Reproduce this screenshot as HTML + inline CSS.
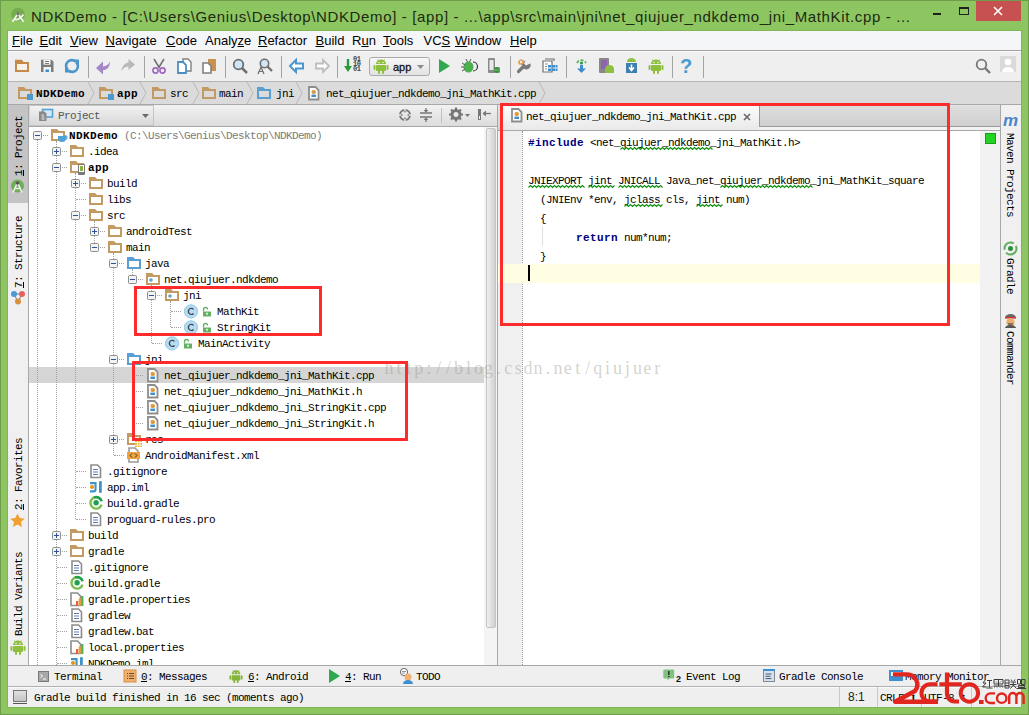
<!DOCTYPE html><html><head><meta charset="utf-8"><style>
*{margin:0;padding:0;box-sizing:border-box}
html,body{width:1029px;height:715px;overflow:hidden;background:#8dc661}
body{position:relative;font-family:"Liberation Sans",sans-serif}
.a{position:absolute;white-space:pre}
.m{font-family:"Liberation Mono",monospace;font-size:11px;letter-spacing:-0.6px;line-height:16px;color:#000}
.mb{font-weight:bold;letter-spacing:0.4px}
.menu{font-size:13px;line-height:19px;color:#000}
.sep{position:absolute;width:1px;background:#a4a4a4}
svg{position:absolute;overflow:visible}
.vd{position:absolute;width:1px;border-left:1px dotted #a3a3a3}
.hd{position:absolute;height:1px;border-top:1px dotted #a3a3a3}
.vt{position:absolute;transform-origin:0 0;font-family:"Liberation Mono",monospace;font-size:11px;letter-spacing:-0.6px;line-height:14px;color:#000;white-space:pre}
</style></head><body>
<div class="a" style="left:0px;top:0px;width:1029px;height:715px;background:transparent;border:1px solid #6f9c4c"></div>
<div class="a " style="left:31px;top:8px;font-size:15px;letter-spacing:0.64px;color:#1d2a12;line-height:18px">NDKDemo - [C:\Users\Genius\Desktop\NDKDemo] - [app] - ...\app\src\main\jni\net_qiujuer_ndkdemo_jni_MathKit.cpp - ...</div>
<svg style="left:10px;top:7px" width="16" height="16" viewBox="0 0 16 16"><circle cx="8" cy="7.5" r="6.8" fill="#76ad4c"/><path d="M6.8 9.5V5.8a1.2 1.4 0 0 1 2.4 0V9.5z" fill="#7a7a7a"/><path d="M2.5 14.7L7 8M13.5 14.7L9 8M4.5 12q3.5 2.5 9-4.5" fill="none" stroke="#f4f4f4" stroke-width="1.7"/></svg>
<div class="a" style="left:933px;top:13px;width:8px;height:2px;background:#1f1f1f;"></div>
<div class="a" style="left:959px;top:7px;width:10px;height:8px;border:1px solid #1f1f1f;border-top-width:2px"></div>
<div class="a" style="left:976px;top:1px;width:45px;height:20px;background:#c75050;"></div>
<svg style="left:993px;top:6px" width="10" height="10" viewBox="0 0 10 10"><path d="M1 1l8 8M9 1l-8 8" stroke="#fff" stroke-width="1.6"/></svg>
<div class="a" style="left:7px;top:30px;width:1015px;height:678px;background:#80b656;"></div>
<div class="a" style="left:8px;top:31px;width:1013px;height:676px;background:#ececec;"></div>
<div class="a" style="left:8px;top:31px;width:1013px;height:19px;background:#f5f6f7;"></div>
<div class="a" style="left:8px;top:50px;width:1013px;height:1px;background:#a0a0a0;"></div>
<div class="a menu" style="left:12px;top:31px;"><u>F</u>ile</div>
<div class="a menu" style="left:39.5px;top:31px;"><u>E</u>dit</div>
<div class="a menu" style="left:70px;top:31px;"><u>V</u>iew</div>
<div class="a menu" style="left:105.5px;top:31px;"><u>N</u>avigate</div>
<div class="a menu" style="left:166px;top:31px;"><u>C</u>ode</div>
<div class="a menu" style="left:205px;top:31px;">Analy<u>z</u>e</div>
<div class="a menu" style="left:258px;top:31px;"><u>R</u>efactor</div>
<div class="a menu" style="left:315.5px;top:31px;"><u>B</u>uild</div>
<div class="a menu" style="left:352px;top:31px;">R<u>u</u>n</div>
<div class="a menu" style="left:383px;top:31px;"><u>T</u>ools</div>
<div class="a menu" style="left:423.5px;top:31px;">VC<u>S</u></div>
<div class="a menu" style="left:455px;top:31px;"><u>W</u>indow</div>
<div class="a menu" style="left:510px;top:31px;"><u>H</u>elp</div>
<div class="a" style="left:8px;top:51px;width:1013px;height:30px;background:#efefef;"></div>
<div class="a" style="left:8px;top:51px;width:1013px;height:1px;background:#fafafa;"></div>
<div class="a" style="left:8px;top:81px;width:1013px;height:1px;background:#b4b4b4;"></div>
<div class="a" style="left:8px;top:82px;width:1013px;height:22px;background:#dbdbdb;"></div>
<div class="a" style="left:8px;top:104px;width:1013px;height:1px;background:#a8a8a8;"></div>
<div class="a" style="left:8px;top:105px;width:20px;height:560px;background:#f0f0f0;"></div>
<div class="a" style="left:8px;top:105px;width:20px;height:98px;background:#c4c4c4;"></div>
<div class="a" style="left:28px;top:105px;width:1px;height:560px;background:#a8a8a8;"></div>
<div class="a" style="left:29px;top:105px;width:468px;height:21px;background:linear-gradient(#f2f2f2,#dcdcdc);"></div>
<div class="a" style="left:29px;top:126px;width:468px;height:1px;background:#a8a8a8;"></div>
<div class="a" style="left:29px;top:127px;width:468px;height:538px;background:#fff;"></div>
<div class="a" style="left:497px;top:105px;width:1px;height:560px;background:#a8a8a8;"></div>
<div class="a" style="left:29px;top:367px;width:455px;height:16px;background:#d5d5d5;"></div>
<div class="vd" style="left:37px;top:140px;height:525px"></div>
<div class="vd" style="left:56px;top:141px;height:524px"></div>
<div class="vd" style="left:75px;top:173px;height:346px"></div>
<div class="vd" style="left:94px;top:221px;height:26px"></div>
<div class="vd" style="left:113px;top:253px;height:202px"></div>
<div class="vd" style="left:132px;top:269px;height:10px"></div>
<div class="vd" style="left:151px;top:285px;height:58px"></div>
<div class="vd" style="left:170px;top:301px;height:26px"></div>
<div class="vd" style="left:132px;top:365px;height:58px"></div>
<div class="hd" style="left:38px;top:135px;width:10px"></div>
<div class="hd" style="left:57px;top:151px;width:10px"></div>
<div class="hd" style="left:57px;top:167px;width:10px"></div>
<div class="hd" style="left:76px;top:183px;width:10px"></div>
<div class="hd" style="left:76px;top:199px;width:10px"></div>
<div class="hd" style="left:76px;top:215px;width:10px"></div>
<div class="hd" style="left:95px;top:231px;width:10px"></div>
<div class="hd" style="left:95px;top:247px;width:10px"></div>
<div class="hd" style="left:114px;top:263px;width:10px"></div>
<div class="hd" style="left:133px;top:279px;width:10px"></div>
<div class="hd" style="left:152px;top:295px;width:10px"></div>
<div class="hd" style="left:171px;top:311px;width:10px"></div>
<div class="hd" style="left:171px;top:327px;width:10px"></div>
<div class="hd" style="left:152px;top:343px;width:10px"></div>
<div class="hd" style="left:114px;top:359px;width:10px"></div>
<div class="hd" style="left:133px;top:375px;width:10px"></div>
<div class="hd" style="left:133px;top:391px;width:10px"></div>
<div class="hd" style="left:133px;top:407px;width:10px"></div>
<div class="hd" style="left:133px;top:423px;width:10px"></div>
<div class="hd" style="left:114px;top:439px;width:10px"></div>
<div class="hd" style="left:114px;top:455px;width:10px"></div>
<div class="hd" style="left:76px;top:471px;width:10px"></div>
<div class="hd" style="left:76px;top:487px;width:10px"></div>
<div class="hd" style="left:76px;top:503px;width:10px"></div>
<div class="hd" style="left:76px;top:519px;width:10px"></div>
<div class="hd" style="left:57px;top:535px;width:10px"></div>
<div class="hd" style="left:57px;top:551px;width:10px"></div>
<div class="hd" style="left:57px;top:567px;width:10px"></div>
<div class="hd" style="left:57px;top:583px;width:10px"></div>
<div class="hd" style="left:57px;top:599px;width:10px"></div>
<div class="hd" style="left:57px;top:615px;width:10px"></div>
<div class="hd" style="left:57px;top:631px;width:10px"></div>
<div class="hd" style="left:57px;top:647px;width:10px"></div>
<div class="hd" style="left:57px;top:663px;width:10px"></div>
<svg style="left:33px;top:131px" width="9" height="9" viewBox="0 0 9 9"><rect x=".5" y=".5" width="8" height="8" rx="1" fill="#f3f3f3" stroke="#8f8f8f"/><path d="M2 4.5h5" stroke="#2f4f9a"/></svg>
<svg style="left:50px;top:127px" width="16" height="16" viewBox="0 0 16 16"><path d="M1 2h6l2 2h6v10H1z M3 6v6h10V6z" fill="#c39a62" fill-rule="evenodd"/><path d="M8 9h8v2.5a4 3.5 0 0 1-8 0z" fill="#4ea3d9"/><circle cx="15.5" cy="10.5" r="1.6" fill="none" stroke="#4ea3d9" stroke-width="1.2"/></svg>
<div class="a m" style="left:69px;top:128px;"><span class="mb">NDKDemo</span> <span style="color:#7b7b7b">(C:\Users\Genius\Desktop\NDKDemo)</span></div>
<svg style="left:52px;top:147px" width="9" height="9" viewBox="0 0 9 9"><rect x=".5" y=".5" width="8" height="8" rx="1" fill="#f3f3f3" stroke="#8f8f8f"/><path d="M2 4.5h5" stroke="#2f4f9a"/><path d="M4.5 2v5" stroke="#2f4f9a"/></svg>
<svg style="left:69px;top:143px" width="16" height="16" viewBox="0 0 16 16"><path d="M1 2h6l2 2h6v10H1z M3 6v6h10V6z" fill="#c39a62" fill-rule="evenodd"/></svg>
<div class="a m" style="left:88px;top:144px;">.idea</div>
<svg style="left:52px;top:163px" width="9" height="9" viewBox="0 0 9 9"><rect x=".5" y=".5" width="8" height="8" rx="1" fill="#f3f3f3" stroke="#8f8f8f"/><path d="M2 4.5h5" stroke="#2f4f9a"/></svg>
<svg style="left:69px;top:159px" width="16" height="16" viewBox="0 0 16 16"><path d="M1 2h6l2 2h6v10H1z M3 6v6h10V6z" fill="#c39a62" fill-rule="evenodd"/><rect x="9" y="5" width="7" height="11" rx="1" fill="#7a7a7a"/><rect x="10" y="6" width="5" height="7" fill="#fff"/><rect x="11" y="7" width="3" height="5" fill="#8bb33a"/></svg>
<div class="a m mb" style="left:88px;top:160px;">app</div>
<svg style="left:71px;top:179px" width="9" height="9" viewBox="0 0 9 9"><rect x=".5" y=".5" width="8" height="8" rx="1" fill="#f3f3f3" stroke="#8f8f8f"/><path d="M2 4.5h5" stroke="#2f4f9a"/><path d="M4.5 2v5" stroke="#2f4f9a"/></svg>
<svg style="left:88px;top:175px" width="16" height="16" viewBox="0 0 16 16"><path d="M1 2h6l2 2h6v10H1z M3 6v6h10V6z" fill="#c39a62" fill-rule="evenodd"/></svg>
<div class="a m" style="left:107px;top:176px;">build</div>
<svg style="left:88px;top:191px" width="16" height="16" viewBox="0 0 16 16"><path d="M1 2h6l2 2h6v10H1z M3 6v6h10V6z" fill="#c39a62" fill-rule="evenodd"/></svg>
<div class="a m" style="left:107px;top:192px;">libs</div>
<svg style="left:71px;top:211px" width="9" height="9" viewBox="0 0 9 9"><rect x=".5" y=".5" width="8" height="8" rx="1" fill="#f3f3f3" stroke="#8f8f8f"/><path d="M2 4.5h5" stroke="#2f4f9a"/></svg>
<svg style="left:88px;top:207px" width="16" height="16" viewBox="0 0 16 16"><path d="M1 2h6l2 2h6v10H1z M3 6v6h10V6z" fill="#c39a62" fill-rule="evenodd"/></svg>
<div class="a m" style="left:107px;top:208px;">src</div>
<svg style="left:90px;top:227px" width="9" height="9" viewBox="0 0 9 9"><rect x=".5" y=".5" width="8" height="8" rx="1" fill="#f3f3f3" stroke="#8f8f8f"/><path d="M2 4.5h5" stroke="#2f4f9a"/><path d="M4.5 2v5" stroke="#2f4f9a"/></svg>
<svg style="left:107px;top:223px" width="16" height="16" viewBox="0 0 16 16"><path d="M1 2h6l2 2h6v10H1z M3 6v6h10V6z" fill="#c39a62" fill-rule="evenodd"/></svg>
<div class="a m" style="left:126px;top:224px;">androidTest</div>
<svg style="left:90px;top:243px" width="9" height="9" viewBox="0 0 9 9"><rect x=".5" y=".5" width="8" height="8" rx="1" fill="#f3f3f3" stroke="#8f8f8f"/><path d="M2 4.5h5" stroke="#2f4f9a"/></svg>
<svg style="left:107px;top:239px" width="16" height="16" viewBox="0 0 16 16"><path d="M1 2h6l2 2h6v10H1z M3 6v6h10V6z" fill="#c39a62" fill-rule="evenodd"/></svg>
<div class="a m" style="left:126px;top:240px;">main</div>
<svg style="left:109px;top:259px" width="9" height="9" viewBox="0 0 9 9"><rect x=".5" y=".5" width="8" height="8" rx="1" fill="#f3f3f3" stroke="#8f8f8f"/><path d="M2 4.5h5" stroke="#2f4f9a"/></svg>
<svg style="left:126px;top:255px" width="16" height="16" viewBox="0 0 16 16"><path d="M1 2h6l2 2h6v10H1z M3 6v6h10V6z" fill="#5a9fd2" fill-rule="evenodd"/></svg>
<div class="a m" style="left:145px;top:256px;">java</div>
<svg style="left:128px;top:275px" width="9" height="9" viewBox="0 0 9 9"><rect x=".5" y=".5" width="8" height="8" rx="1" fill="#f3f3f3" stroke="#8f8f8f"/><path d="M2 4.5h5" stroke="#2f4f9a"/></svg>
<svg style="left:145px;top:271px" width="16" height="16" viewBox="0 0 16 16"><path d="M1 2h6l2 2h6v10H1z M3 6v6h10V6z" fill="#c39a62" fill-rule="evenodd"/><circle cx="6" cy="9" r="1.8" fill="#62a0d0"/></svg>
<div class="a m" style="left:164px;top:272px;">net.qiujuer.ndkdemo</div>
<svg style="left:147px;top:291px" width="9" height="9" viewBox="0 0 9 9"><rect x=".5" y=".5" width="8" height="8" rx="1" fill="#f3f3f3" stroke="#8f8f8f"/><path d="M2 4.5h5" stroke="#2f4f9a"/></svg>
<svg style="left:164px;top:287px" width="16" height="16" viewBox="0 0 16 16"><path d="M1 2h6l2 2h6v10H1z M3 6v6h10V6z" fill="#c39a62" fill-rule="evenodd"/><circle cx="6" cy="9" r="1.8" fill="#62a0d0"/></svg>
<div class="a m" style="left:183px;top:288px;">jni</div>
<svg style="left:183px;top:303px" width="16" height="16" viewBox="0 0 16 16"><circle cx="8" cy="8.4" r="6.6" fill="#b4dcf5" stroke="#92c7ea" stroke-width="1"/><path d="M10.5 6.3a2.9 3.1 0 1 0 0 4.2" fill="none" stroke="#404040" stroke-width="1.15"/><rect x="20" y="8.5" width="8" height="5" rx=".5" fill="#62b062"/><path d="M20.5 8.5V6.5a2 2 0 0 1 4 0" fill="none" stroke="#62b062" stroke-width="1.3"/><path d="M23 10.3h2M24 10.3v2" stroke="#fff" stroke-width=".9"/></svg>
<div class="a m" style="left:217px;top:304px;">MathKit</div>
<svg style="left:183px;top:319px" width="16" height="16" viewBox="0 0 16 16"><circle cx="8" cy="8.4" r="6.6" fill="#b4dcf5" stroke="#92c7ea" stroke-width="1"/><path d="M10.5 6.3a2.9 3.1 0 1 0 0 4.2" fill="none" stroke="#404040" stroke-width="1.15"/><rect x="20" y="8.5" width="8" height="5" rx=".5" fill="#62b062"/><path d="M20.5 8.5V6.5a2 2 0 0 1 4 0" fill="none" stroke="#62b062" stroke-width="1.3"/><path d="M23 10.3h2M24 10.3v2" stroke="#fff" stroke-width=".9"/></svg>
<div class="a m" style="left:217px;top:320px;">StringKit</div>
<svg style="left:164px;top:335px" width="16" height="16" viewBox="0 0 16 16"><circle cx="8" cy="8.4" r="6.6" fill="#b4dcf5" stroke="#92c7ea" stroke-width="1"/><path d="M10.5 6.3a2.9 3.1 0 1 0 0 4.2" fill="none" stroke="#404040" stroke-width="1.15"/><rect x="20" y="8.5" width="8" height="5" rx=".5" fill="#62b062"/><path d="M20.5 8.5V6.5a2 2 0 0 1 4 0" fill="none" stroke="#62b062" stroke-width="1.3"/><path d="M23 10.3h2M24 10.3v2" stroke="#fff" stroke-width=".9"/></svg>
<div class="a m" style="left:198px;top:336px;">MainActivity</div>
<svg style="left:109px;top:355px" width="9" height="9" viewBox="0 0 9 9"><rect x=".5" y=".5" width="8" height="8" rx="1" fill="#f3f3f3" stroke="#8f8f8f"/><path d="M2 4.5h5" stroke="#2f4f9a"/></svg>
<svg style="left:126px;top:351px" width="16" height="16" viewBox="0 0 16 16"><path d="M1 2h6l2 2h6v10H1z M3 6v6h10V6z" fill="#5a9fd2" fill-rule="evenodd"/></svg>
<div class="a m" style="left:145px;top:352px;">jni</div>
<svg style="left:145px;top:367px" width="16" height="16" viewBox="0 0 16 16"><path d="M3 2h6.5l3 3v9.5H3z" fill="#fff" stroke="#8d8d8d" stroke-width="1.8"/><circle cx="7.7" cy="7" r="2.3" fill="#f0a33c"/><rect x="5.4" y="9.6" width="4.6" height="2.4" fill="#3d8fd0"/><circle cx="7" cy="7" r=".5" fill="#3d8fd0"/><circle cx="8.5" cy="7" r=".5" fill="#3d8fd0"/></svg>
<div class="a m" style="left:164px;top:368px;">net_qiujuer_ndkdemo_jni_MathKit.cpp</div>
<svg style="left:145px;top:383px" width="16" height="16" viewBox="0 0 16 16"><path d="M3 2h6.5l3 3v9.5H3z" fill="#fff" stroke="#8d8d8d" stroke-width="1.8"/><circle cx="7.7" cy="7" r="2.3" fill="#f0a33c"/><rect x="5.4" y="9.6" width="4.6" height="2.4" fill="#3d8fd0"/><circle cx="7" cy="7" r=".5" fill="#3d8fd0"/><circle cx="8.5" cy="7" r=".5" fill="#3d8fd0"/></svg>
<div class="a m" style="left:164px;top:384px;">net_qiujuer_ndkdemo_jni_MathKit.h</div>
<svg style="left:145px;top:399px" width="16" height="16" viewBox="0 0 16 16"><path d="M3 2h6.5l3 3v9.5H3z" fill="#fff" stroke="#8d8d8d" stroke-width="1.8"/><circle cx="7.7" cy="7" r="2.3" fill="#f0a33c"/><rect x="5.4" y="9.6" width="4.6" height="2.4" fill="#3d8fd0"/><circle cx="7" cy="7" r=".5" fill="#3d8fd0"/><circle cx="8.5" cy="7" r=".5" fill="#3d8fd0"/></svg>
<div class="a m" style="left:164px;top:400px;">net_qiujuer_ndkdemo_jni_StringKit.cpp</div>
<svg style="left:145px;top:415px" width="16" height="16" viewBox="0 0 16 16"><path d="M3 2h6.5l3 3v9.5H3z" fill="#fff" stroke="#8d8d8d" stroke-width="1.8"/><circle cx="7.7" cy="7" r="2.3" fill="#f0a33c"/><rect x="5.4" y="9.6" width="4.6" height="2.4" fill="#3d8fd0"/><circle cx="7" cy="7" r=".5" fill="#3d8fd0"/><circle cx="8.5" cy="7" r=".5" fill="#3d8fd0"/></svg>
<div class="a m" style="left:164px;top:416px;">net_qiujuer_ndkdemo_jni_StringKit.h</div>
<svg style="left:109px;top:435px" width="9" height="9" viewBox="0 0 9 9"><rect x=".5" y=".5" width="8" height="8" rx="1" fill="#f3f3f3" stroke="#8f8f8f"/><path d="M2 4.5h5" stroke="#2f4f9a"/><path d="M4.5 2v5" stroke="#2f4f9a"/></svg>
<svg style="left:126px;top:431px" width="16" height="16" viewBox="0 0 16 16"><path d="M1 2h6l2 2h6v10H1z M3 6v6h10V6z" fill="#c39a62" fill-rule="evenodd"/><rect x="9" y="9" width="7" height="7" fill="#e8b43a"/><path d="M9 11.5h7M9 14h7M11.5 9v7M14 9v7" stroke="#fff" stroke-width=".8"/></svg>
<div class="a m" style="left:145px;top:432px;">res</div>
<svg style="left:126px;top:447px" width="16" height="16" viewBox="0 0 16 16"><path d="M3 1h6l3 3v11H3z" fill="#fff" stroke="#9a9a9a" stroke-width="1.6"/><rect x="1" y="5" width="13" height="7" fill="#f0a33c"/><path d="M6 6.5l-2 2 2 2M9 6.5l2 2-2 2" fill="none" stroke="#333" stroke-width="1"/></svg>
<div class="a m" style="left:145px;top:448px;">AndroidManifest.xml</div>
<svg style="left:88px;top:463px" width="16" height="16" viewBox="0 0 16 16"><path d="M3 2h6.5l3 3v9.5H3z" fill="#fff" stroke="#8d8d8d" stroke-width="1.6"/><path d="M5 6.5h5M5 9h5M5 11.5h5" stroke="#5a7fb0" stroke-width="1"/></svg>
<div class="a m" style="left:107px;top:464px;">.gitignore</div>
<svg style="left:88px;top:479px" width="16" height="16" viewBox="0 0 16 16"><path d="M2 3h6.6v7.5a3 3 0 0 1-3 3H2v-2.2h3.5a1 1 0 0 0 1-1V5.2H2z" fill="#3e94c8"/><rect x="11" y="2" width="2.8" height="12" rx="1.2" fill="#3e94c8"/><circle cx="4" cy="8" r="2" fill="#e8920c"/></svg>
<div class="a m" style="left:107px;top:480px;">app.iml</div>
<svg style="left:88px;top:495px" width="16" height="16" viewBox="0 0 16 16"><path d="M13.6 6.2A5.7 5.7 0 1 0 13.6 9.6" fill="none" stroke="#7dbf4f" stroke-width="2.4"/><path d="M6 2.4A5.7 5.7 0 0 1 13.6 6.2" fill="none" stroke="#1ea050" stroke-width="2.4"/><circle cx="8.1" cy="7.8" r="2.7" fill="#1ea050"/></svg>
<div class="a m" style="left:107px;top:496px;">build.gradle</div>
<svg style="left:88px;top:511px" width="16" height="16" viewBox="0 0 16 16"><path d="M3 2h6.5l3 3v9.5H3z" fill="#fff" stroke="#8d8d8d" stroke-width="1.6"/><path d="M5 6.5h5M5 9h5M5 11.5h5" stroke="#5a7fb0" stroke-width="1"/></svg>
<div class="a m" style="left:107px;top:512px;">proguard-rules.pro</div>
<svg style="left:52px;top:531px" width="9" height="9" viewBox="0 0 9 9"><rect x=".5" y=".5" width="8" height="8" rx="1" fill="#f3f3f3" stroke="#8f8f8f"/><path d="M2 4.5h5" stroke="#2f4f9a"/><path d="M4.5 2v5" stroke="#2f4f9a"/></svg>
<svg style="left:69px;top:527px" width="16" height="16" viewBox="0 0 16 16"><path d="M1 2h6l2 2h6v10H1z M3 6v6h10V6z" fill="#c39a62" fill-rule="evenodd"/></svg>
<div class="a m" style="left:88px;top:528px;">build</div>
<svg style="left:52px;top:547px" width="9" height="9" viewBox="0 0 9 9"><rect x=".5" y=".5" width="8" height="8" rx="1" fill="#f3f3f3" stroke="#8f8f8f"/><path d="M2 4.5h5" stroke="#2f4f9a"/><path d="M4.5 2v5" stroke="#2f4f9a"/></svg>
<svg style="left:69px;top:543px" width="16" height="16" viewBox="0 0 16 16"><path d="M1 2h6l2 2h6v10H1z M3 6v6h10V6z" fill="#c39a62" fill-rule="evenodd"/></svg>
<div class="a m" style="left:88px;top:544px;">gradle</div>
<svg style="left:69px;top:559px" width="16" height="16" viewBox="0 0 16 16"><path d="M3 2h6.5l3 3v9.5H3z" fill="#fff" stroke="#8d8d8d" stroke-width="1.6"/><path d="M5 6.5h5M5 9h5M5 11.5h5" stroke="#5a7fb0" stroke-width="1"/></svg>
<div class="a m" style="left:88px;top:560px;">.gitignore</div>
<svg style="left:69px;top:575px" width="16" height="16" viewBox="0 0 16 16"><path d="M13.6 6.2A5.7 5.7 0 1 0 13.6 9.6" fill="none" stroke="#7dbf4f" stroke-width="2.4"/><path d="M6 2.4A5.7 5.7 0 0 1 13.6 6.2" fill="none" stroke="#1ea050" stroke-width="2.4"/><circle cx="8.1" cy="7.8" r="2.7" fill="#1ea050"/></svg>
<div class="a m" style="left:88px;top:576px;">build.gradle</div>
<svg style="left:69px;top:591px" width="16" height="16" viewBox="0 0 16 16"><path d="M2 2h6.5l3 3v9.5H2z" fill="#fff" stroke="#8d8d8d" stroke-width="1.6"/><rect x="7" y="10" width="2.2" height="5" fill="#e8603c"/><rect x="9.6" y="7.5" width="2.2" height="7.5" fill="#f0a030"/><rect x="12.2" y="5" width="2.2" height="10" fill="#4caf50"/></svg>
<div class="a m" style="left:88px;top:592px;">gradle.properties</div>
<svg style="left:69px;top:607px" width="16" height="16" viewBox="0 0 16 16"><path d="M3 2h6.5l3 3v9.5H3z" fill="#fff" stroke="#8d8d8d" stroke-width="1.6"/><path d="M5 6.5h5M5 9h5M5 11.5h5" stroke="#5a7fb0" stroke-width="1"/></svg>
<div class="a m" style="left:88px;top:608px;">gradlew</div>
<svg style="left:69px;top:623px" width="16" height="16" viewBox="0 0 16 16"><path d="M3 2h6.5l3 3v9.5H3z" fill="#fff" stroke="#8d8d8d" stroke-width="1.6"/><path d="M5 6.5h5M5 9h5M5 11.5h5" stroke="#5a7fb0" stroke-width="1"/></svg>
<div class="a m" style="left:88px;top:624px;">gradlew.bat</div>
<svg style="left:69px;top:639px" width="16" height="16" viewBox="0 0 16 16"><path d="M2 2h6.5l3 3v9.5H2z" fill="#fff" stroke="#8d8d8d" stroke-width="1.6"/><rect x="7" y="10" width="2.2" height="5" fill="#e8603c"/><rect x="9.6" y="7.5" width="2.2" height="7.5" fill="#f0a030"/><rect x="12.2" y="5" width="2.2" height="10" fill="#4caf50"/></svg>
<div class="a m" style="left:88px;top:640px;">local.properties</div>
<svg style="left:69px;top:655px" width="16" height="16" viewBox="0 0 16 16"><path d="M2 3h6.6v7.5a3 3 0 0 1-3 3H2v-2.2h3.5a1 1 0 0 0 1-1V5.2H2z" fill="#3e94c8"/><rect x="11" y="2" width="2.8" height="12" rx="1.2" fill="#3e94c8"/><circle cx="4" cy="8" r="2" fill="#e8920c"/></svg>
<div class="a m" style="left:88px;top:656px;">NDKDemo.iml</div>
<div class="a" style="left:484px;top:127px;width:13px;height:538px;background:#f4f4f4;"></div>
<div class="a" style="left:486px;top:128px;width:10px;height:500px;background:linear-gradient(90deg,#f0f0f0,#d0d0d0);border:1px solid #c4c4c4;border-radius:2px"></div>
<div class="a" style="left:498px;top:105px;width:502px;height:25px;background:linear-gradient(#e4e4e4,#d2d2d2);"></div>
<div class="a" style="left:503px;top:106px;width:256px;height:24px;background:linear-gradient(#fcfcfc,#e9e9e9);"></div>
<div class="a" style="left:759px;top:106px;width:241px;height:21px;background:linear-gradient(#dedede,#cfcfcf);border-left:1px solid #9a9a9a;border-bottom:1px solid #9a9a9a"></div>
<div class="a" style="left:759px;top:127px;width:241px;height:3px;background:#f2f2f2;"></div>
<div class="a" style="left:498px;top:130px;width:502px;height:1px;background:#a8a8a8;"></div>
<div class="a" style="left:498px;top:131px;width:482px;height:534px;background:#fff;"></div>
<div class="a" style="left:498px;top:131px;width:24px;height:534px;background:#f0f0f0;"></div>
<div class="vd" style="left:522px;top:131px;height:534px;border-left-color:#9a9a9a"></div>
<div class="a" style="left:498px;top:264px;width:482px;height:19px;background:#fffde2;"></div>
<div class="a" style="left:980px;top:131px;width:20px;height:534px;background:#f2f2f2;"></div>
<div class="a" style="left:985px;top:133px;width:11px;height:11px;background:#22d322;border:1px solid #16a016"></div>
<div class="a" style="left:1000px;top:105px;width:1px;height:560px;background:#a8a8a8;"></div>
<div class="a" style="left:1001px;top:105px;width:20px;height:560px;background:#f0f0f0;"></div>
<div class="a" style="left:8px;top:665px;width:1013px;height:1px;background:#a8a8a8;"></div>
<div class="a" style="left:8px;top:666px;width:1013px;height:20px;background:#efefef;"></div>
<div class="a" style="left:8px;top:686px;width:1013px;height:1px;background:#b0b0b0;"></div>
<div class="a" style="left:8px;top:687px;width:1013px;height:20px;background:#efefef;"></div>
<div class="a" style="left:8px;top:687px;width:1013px;height:1px;background:#fafafa;"></div>
<svg style="left:14px;top:58px" width="16" height="16" viewBox="0 0 16 16"><path d="M1 1.7h7l1.5 2.3H15v10H1z M3 6v6h10V6z" fill="#c48a48" fill-rule="evenodd"/><rect x="3" y="6" width="10" height="6" fill="#f6f1ea"/></svg>
<svg style="left:40px;top:58px" width="16" height="16" viewBox="0 0 16 16"><path d="M1 1.7h10.5l2 2V14H1z" fill="#7b7b7b"/><rect x="3.5" y="1.7" width="7" height="5" fill="#f4f4f4"/><rect x="5" y="3" width="4" height="1" fill="#7b7b7b"/><rect x="5" y="5" width="4" height="1" fill="#7b7b7b"/><rect x="3.5" y="9" width="7.5" height="5" fill="#f4f4f4"/><rect x="5.5" y="11.5" width="3.5" height="2.5" fill="#3d8fd0"/></svg>
<svg style="left:64px;top:58px" width="16" height="16" viewBox="0 0 16 16"><path d="M11.5 3.5A5.3 5.3 0 0 0 4 12" fill="none" stroke="#4a95c9" stroke-width="2.6"/><path d="M4.5 12.5A5.3 5.3 0 0 0 12 4" fill="none" stroke="#4a95c9" stroke-width="2.6"/><path d="M9 1.5h6v6z" fill="#4a95c9"/><path d="M7 14.5H1v-6z" fill="#4a95c9"/></svg>
<div class="sep" style="left:88px;top:56px;height:22px"></div>
<svg style="left:95px;top:58px" width="16" height="16" viewBox="0 0 16 16"><path d="M1 10l7-6.5v13z" fill="#a586c8"/><path d="M7 8.5Q12.5 8.5 15 3.5Q15 12 7 12.5z" fill="#a586c8"/></svg>
<svg style="left:120px;top:58px" width="16" height="16" viewBox="0 0 16 16"><path d="M15 6.5l-6.5-5.5v11z" fill="#b9b9b9"/><path d="M9 4.5Q3 4.5 1 13.5Q4 8.5 9 8.5z" fill="#b9b9b9"/></svg>
<div class="sep" style="left:144px;top:56px;height:22px"></div>
<svg style="left:151px;top:58px" width="16" height="16" viewBox="0 0 16 16"><path d="M3 1l5.5 9M13 1L7.5 10" stroke="#707070" stroke-width="1.5"/><circle cx="4.5" cy="12.5" r="2.6" fill="none" stroke="#a067c0" stroke-width="1.6"/><circle cx="11.5" cy="12.5" r="2.6" fill="none" stroke="#a067c0" stroke-width="1.6"/></svg>
<svg style="left:176px;top:58px" width="16" height="16" viewBox="0 0 16 16"><path d="M7 1h5l3 3v9H7z" fill="#fff" stroke="#808080" stroke-width="1.4"/><path d="M2 4h5l3 3v8H2z" fill="#fff" stroke="#4a8ec4" stroke-width="1.8"/></svg>
<svg style="left:201px;top:58px" width="16" height="16" viewBox="0 0 16 16"><rect x="7" y="1" width="8" height="12" fill="#c8924e"/><path d="M2 5h5l3 3v7H2z" fill="#fff" stroke="#808080" stroke-width="1.6"/></svg>
<div class="sep" style="left:225px;top:56px;height:22px"></div>
<svg style="left:232px;top:58px" width="16" height="16" viewBox="0 0 16 16"><circle cx="6.5" cy="6.5" r="4.8" fill="#cfe6f7" stroke="#6f6f6f" stroke-width="1.8"/><path d="M10 10l5 5" stroke="#6f6f6f" stroke-width="2.5"/></svg>
<svg style="left:257px;top:58px" width="16" height="16" viewBox="0 0 16 16"><circle cx="7.5" cy="5.5" r="4.2" fill="#cfe6f7" stroke="#6f6f6f" stroke-width="1.6"/><path d="M10.5 8.5l4.5 4.5" stroke="#6f6f6f" stroke-width="2.3"/><path d="M1 16l3-7 3 7M2.2 13.5h3.6" fill="none" stroke="#6f6f6f" stroke-width="1.2"/></svg>
<div class="sep" style="left:281px;top:56px;height:22px"></div>
<svg style="left:289px;top:58px" width="16" height="16" viewBox="0 0 16 16"><path d="M1 8l6-6v3.5h7v5H7V14z" fill="#fff" stroke="#4a97cf" stroke-width="2"/></svg>
<svg style="left:314px;top:58px" width="16" height="16" viewBox="0 0 16 16"><path d="M15 8l-6-6v3.5H2v5h7V14z" fill="#fff" stroke="#bdbdbd" stroke-width="1.8"/></svg>
<div class="sep" style="left:337px;top:56px;height:22px"></div>
<svg style="left:344px;top:58px" width="16" height="16" viewBox="0 0 16 16"><path d="M4 1v8" stroke="#2a9a3a" stroke-width="2.4"/><path d="M0 8h8l-4 6z" fill="#2a9a3a"/></svg>
<div class="a" style="left:353px;top:57px;font-family:'Liberation Mono';font-weight:bold;font-size:7px;line-height:4.8px;letter-spacing:-0.5px;color:#444">01
10
01</div>
<div class="a" style="left:369px;top:57px;width:61px;height:19px;border:1px solid #aaa;border-radius:3px;background:linear-gradient(#f8f8f8,#e2e2e2)"></div>
<svg style="left:373px;top:58px" width="16" height="16" viewBox="0 0 16 16"><path d="M3 6a5 4.5 0 0 1 10 0z" fill="#8fbf3f"/><rect x="3" y="7" width="10" height="6" rx="1" fill="#8fbf3f"/><rect x="0.5" y="7" width="2" height="5" rx="1" fill="#8fbf3f"/><rect x="13.5" y="7" width="2" height="5" rx="1" fill="#8fbf3f"/><rect x="5" y="12" width="2" height="4" rx="1" fill="#8fbf3f"/><rect x="9" y="12" width="2" height="4" rx="1" fill="#8fbf3f"/><path d="M4.5 1.5l1.5 2M11.5 1.5l-1.5 2" stroke="#8fbf3f"/><circle cx="6" cy="4.5" r=".7" fill="#fff"/><circle cx="10" cy="4.5" r=".7" fill="#fff"/></svg>
<div class="a " style="left:393px;top:59px;font-family:'Liberation Sans';font-size:11px;line-height:16px;color:#111;-webkit-text-stroke:0.3px #111">app</div>
<svg style="left:417px;top:65px" width="7" height="5" viewBox="0 0 7 5"><path d="M0 0h7l-3.5 4z" fill="#8a8a8a"/></svg>
<svg style="left:438px;top:58px" width="16" height="16" viewBox="0 0 16 16"><path d="M1 1l11 7-11 7z" fill="#2fa84f"/></svg>
<svg style="left:461px;top:58px" width="16" height="16" viewBox="0 0 16 16"><ellipse cx="7.5" cy="9" rx="5" ry="5.5" fill="#4caf50"/><path d="M12 4a4 4 0 0 1 0 9" fill="none" stroke="#333" stroke-width="1.2"/><path d="M1 5l3 2M1 13l3-2M0 9h3M5 1l1.5 3M10 1l-1.5 3" stroke="#555" stroke-width="1"/></svg>
<svg style="left:487px;top:58px" width="16" height="16" viewBox="0 0 16 16"><rect x="1" y="0" width="7" height="15" rx="1" fill="#8a8a8a"/><rect x="2.5" y="2" width="4" height="10" fill="#e9e9e9"/><circle cx="10" cy="12" r="3" fill="#4caf50"/><path d="M7 10h6M7 14h6" stroke="#333" stroke-width=".6"/></svg>
<div class="sep" style="left:510px;top:56px;height:22px"></div>
<svg style="left:517px;top:58px" width="16" height="16" viewBox="0 0 16 16"><path d="M6 9l-4.5 4.5" stroke="#7a7a7a" stroke-width="3.2" stroke-linecap="round"/><path d="M15.5 3.5a4.5 4.5 0 1 1-5-3l-1.5 3 2 2 3-1.5z" fill="#7a7a7a" transform="translate(-2 2)"/><path d="M1 3.2l2.5-2 3 .8.5 3-2.5 2-3-.8z" fill="#e0a050"/><circle cx="4" cy="4" r="1.2" fill="#efefef"/></svg>
<svg style="left:542px;top:58px" width="16" height="16" viewBox="0 0 16 16"><path d="M1 3h9v11H1z" fill="#fff" stroke="#707070" stroke-width="1.2"/><path d="M3 1h9v2" fill="none" stroke="#707070" stroke-width="1.2"/><rect x="6" y="7" width="3" height="2.5" fill="#3d8fd0"/><rect x="10" y="7" width="3" height="2.5" fill="#3d8fd0"/><rect x="6" y="10.5" width="3" height="2.5" fill="#3d8fd0"/><rect x="10" y="10.5" width="3" height="2.5" fill="#3d8fd0"/><rect x="13.5" y="7" width="2" height="2.5" fill="#3d8fd0"/><rect x="13.5" y="10.5" width="2" height="2.5" fill="#3d8fd0"/><path d="M3 6h3M3 8.5h2M3 11h2" stroke="#707070" stroke-width=".8"/></svg>
<div class="sep" style="left:566px;top:56px;height:22px"></div>
<svg style="left:573px;top:58px" width="16" height="16" viewBox="0 0 16 16"><path d="M4 5a5 5 0 0 1 9 0" fill="none" stroke="#5fb05a" stroke-width="1.8" stroke-dasharray="3 1.5"/><circle cx="8.5" cy="5" r="1.6" fill="#2e9d4e"/><rect x="7" y="7" width="3" height="4" fill="#3a8ed0"/><path d="M4 10.5h9L8.5 15z" fill="#3a8ed0"/></svg>
<svg style="left:598px;top:58px" width="16" height="16" viewBox="0 0 16 16"><rect x="1" y="0" width="10" height="15" rx="1" fill="#888"/><rect x="3" y="2" width="6" height="9" fill="#8e64b0"/><path d="M7 11a4 3.5 0 0 1 9 0v4H7z" fill="#8fbf3f"/></svg>
<svg style="left:623px;top:58px" width="16" height="16" viewBox="0 0 16 16"><path d="M4 4a4.5 4 0 0 1 9 0z" fill="#8fbf3f"/><rect x="3" y="5" width="11" height="10" fill="#3f7fae"/><path d="M8.5 6.5v5M6 9.5l2.5 3 2.5-3" fill="none" stroke="#fff" stroke-width="1.6"/></svg>
<svg style="left:648px;top:58px" width="16" height="16" viewBox="0 0 16 16"><path d="M3 6a5 4.5 0 0 1 10 0z" fill="#8fbf3f"/><rect x="3" y="7" width="10" height="6" rx="1" fill="#8fbf3f"/><rect x="0.5" y="7" width="2" height="5" rx="1" fill="#8fbf3f"/><rect x="13.5" y="7" width="2" height="5" rx="1" fill="#8fbf3f"/><rect x="5" y="12" width="2" height="4" rx="1" fill="#8fbf3f"/><rect x="9" y="12" width="2" height="4" rx="1" fill="#8fbf3f"/><path d="M4.5 1.5l1.5 2M11.5 1.5l-1.5 2" stroke="#8fbf3f"/><circle cx="6" cy="4.5" r=".7" fill="#fff"/><circle cx="10" cy="4.5" r=".7" fill="#fff"/></svg>
<div class="sep" style="left:672px;top:56px;height:22px"></div>
<div class="a " style="left:680px;top:55px;font-family:'Liberation Sans';font-weight:bold;font-size:20px;line-height:22px;color:#4b9bd0">?</div>
<div class="sep" style="left:703px;top:56px;height:22px"></div>
<svg style="left:975px;top:58px" width="16" height="16" viewBox="0 0 16 16"><circle cx="6.5" cy="6.5" r="4.8" fill="none" stroke="#777" stroke-width="1.8"/><path d="M10 10l5 5" stroke="#777" stroke-width="2.4"/></svg>
<svg style="left:1000px;top:56px" width="16" height="16" viewBox="0 0 16 16"><rect x="0" y="0" width="16" height="16" fill="#dadada"/><circle cx="8" cy="6" r="3.3" fill="#fff"/><path d="M2 16a6 5 0 0 1 12 0z" fill="#fff"/></svg>
<svg style="left:17px;top:85px" width="16" height="16" viewBox="0 0 16 16"><path d="M1 2h6l2 2h6v10H1z M3 6v6h10V6z" fill="#c39a62" fill-rule="evenodd"/><rect x="10" y="9" width="6" height="6" fill="#4a9ad2"/></svg>
<div class="a m mb" style="left:36px;top:86px;">NDKDemo</div>
<svg style="left:88px;top:82px" width="7" height="22" viewBox="0 0 7 22"><path d="M0 0l6 11L0 22" fill="none" stroke="#b9b9b9" stroke-width="1"/></svg>
<svg style="left:98px;top:85px" width="16" height="16" viewBox="0 0 16 16"><path d="M1 2h6l2 2h6v10H1z M3 6v6h10V6z" fill="#c39a62" fill-rule="evenodd"/><rect x="10" y="9" width="6" height="6" fill="#4a9ad2"/></svg>
<div class="a m mb" style="left:117px;top:86px;">app</div>
<svg style="left:140px;top:82px" width="7" height="22" viewBox="0 0 7 22"><path d="M0 0l6 11L0 22" fill="none" stroke="#b9b9b9" stroke-width="1"/></svg>
<svg style="left:151px;top:85px" width="16" height="16" viewBox="0 0 16 16"><path d="M1 2h6l2 2h6v10H1z M3 6v6h10V6z" fill="#c39a62" fill-rule="evenodd"/></svg>
<div class="a m" style="left:170px;top:86px;">src</div>
<svg style="left:193px;top:82px" width="7" height="22" viewBox="0 0 7 22"><path d="M0 0l6 11L0 22" fill="none" stroke="#b9b9b9" stroke-width="1"/></svg>
<svg style="left:201px;top:85px" width="16" height="16" viewBox="0 0 16 16"><path d="M1 2h6l2 2h6v10H1z M3 6v6h10V6z" fill="#c39a62" fill-rule="evenodd"/></svg>
<div class="a m" style="left:219px;top:86px;">main</div>
<svg style="left:247px;top:82px" width="7" height="22" viewBox="0 0 7 22"><path d="M0 0l6 11L0 22" fill="none" stroke="#b9b9b9" stroke-width="1"/></svg>
<svg style="left:256px;top:85px" width="16" height="16" viewBox="0 0 16 16"><path d="M1 2h6l2 2h6v10H1z M3 6v6h10V6z" fill="#5a9fd2" fill-rule="evenodd"/></svg>
<div class="a m" style="left:276px;top:86px;">jni</div>
<svg style="left:296px;top:82px" width="7" height="22" viewBox="0 0 7 22"><path d="M0 0l6 11L0 22" fill="none" stroke="#b9b9b9" stroke-width="1"/></svg>
<svg style="left:306px;top:85px" width="16" height="16" viewBox="0 0 16 16"><path d="M3 2h6.5l3 3v9.5H3z" fill="#fff" stroke="#8d8d8d" stroke-width="1.8"/><circle cx="7.7" cy="7" r="2.3" fill="#f0a33c"/><rect x="5.4" y="9.6" width="4.6" height="2.4" fill="#3d8fd0"/><circle cx="7" cy="7" r=".5" fill="#3d8fd0"/><circle cx="8.5" cy="7" r=".5" fill="#3d8fd0"/></svg>
<div class="a m" style="left:326px;top:86px;">net_qiujuer_ndkdemo_jni_MathKit.cpp</div>
<svg style="left:539px;top:82px" width="7" height="22" viewBox="0 0 7 22"><path d="M0 0l6 11L0 22" fill="none" stroke="#b9b9b9" stroke-width="1"/></svg>
<div class="a" style="left:29px;top:105px;width:125px;height:21px;border:1px solid #c4c4c4;border-left-color:#d8d8d8;background:linear-gradient(#f2f2f2,#d8d8d8)"></div>
<svg style="left:38px;top:108px" width="16" height="16" viewBox="0 0 16 16"><rect x="4.5" y="1.5" width="10" height="7.5" fill="#d4eaf8" stroke="#5aa0d0" stroke-width="1.6"/><path d="M1 3.5h5.5l2 2V13H1z" fill="#8a8a8a"/><path d="M3.5 7h2.5M3.5 9h3M3.5 11h3" stroke="#e8e8e8" stroke-width="1"/></svg>
<div class="a m" style="left:58px;top:107px;color:#555;line-height:18px">Project</div>
<svg style="left:142px;top:114px" width="7" height="4" viewBox="0 0 7 4"><path d="M0 0h7l-3.5 4z" fill="#6a6a6a"/></svg>
<svg style="left:398px;top:108px" width="14" height="14" viewBox="0 0 14 14"><circle cx="7" cy="7" r="5" fill="none" stroke="#777" stroke-width="2"/><path d="M7 1v2.5M7 10.5V13M1 7h2.5M10.5 7H13" stroke="#efefef" stroke-width="1.4"/><path d="M7 3v1.5M7 9.5V11M3 7h1.5M9.5 7H11" stroke="#777" stroke-width="1.4"/></svg>
<svg style="left:420px;top:108px" width="12" height="14" viewBox="0 0 12 14"><path d="M0 5h12M0 9h12" stroke="#777" stroke-width="1.3"/><path d="M6 0v4M6 14v-4" stroke="#777" stroke-width="1.3"/><path d="M3.5 2L6 4.5 8.5 2zM3.5 12L6 9.5 8.5 12z" fill="#777"/></svg>
<div class="sep" style="left:441px;top:108px;height:15px;background:#c0c0c0"></div>
<svg style="left:449px;top:107px" width="22" height="15" viewBox="0 0 22 15"><circle cx="7" cy="7.5" r="4" fill="none" stroke="#777" stroke-width="3"/><path d="M7 0.5v3M7 11.5v3M0 7.5h3M11 7.5h3M2 2.5l2 2M10 10.5l2 2M12 2.5l-2 2M4 10.5l-2 2" stroke="#777" stroke-width="2.2"/><path d="M16 7h5l-2.5 3z" fill="#777"/></svg>
<svg style="left:478px;top:109px" width="14" height="12" viewBox="0 0 14 12"><rect x="0" y="0" width="3" height="11" fill="#777"/><rect x="1" y="7" width="1" height="3" fill="#fff"/><path d="M5 4.5h8" stroke="#777" stroke-width="1.3"/><path d="M4.5 4.5l3.5-3v6z" fill="#777"/></svg>
<svg style="left:509px;top:107px" width="16" height="16" viewBox="0 0 16 16"><path d="M3 2h6.5l3 3v9.5H3z" fill="#fff" stroke="#8d8d8d" stroke-width="1.8"/><circle cx="7.7" cy="7" r="2.3" fill="#f0a33c"/><rect x="5.4" y="9.6" width="4.6" height="2.4" fill="#3d8fd0"/><circle cx="7" cy="7" r=".5" fill="#3d8fd0"/><circle cx="8.5" cy="7" r=".5" fill="#3d8fd0"/></svg>
<div class="a m" style="left:526px;top:109px;line-height:16px">net_qiujuer_ndkdemo_jni_MathKit.cpp</div>
<svg style="left:743px;top:113px" width="8" height="8" viewBox="0 0 8 8"><path d="M1 1l6 6M7 1L1 7" stroke="#666" stroke-width="1.6"/></svg>
<div class="a m" style="left:528px;top:134px;line-height:19px"><b style="color:#000080;letter-spacing:0.4px">#include</b> &lt;net_qiujuer_ndkdemo_jni_MathKit.h&gt;</div>
<div class="a m" style="left:528px;top:172px;line-height:19px">JNIEXPORT jint JNICALL Java_net_qiujuer_ndkdemo_jni_MathKit_square</div>
<div class="a m" style="left:528px;top:191px;line-height:19px">  (JNIEnv *env, jclass cls, jint num)</div>
<div class="a m" style="left:528px;top:210px;line-height:19px">  {</div>
<div class="a m" style="left:528px;top:229px;line-height:19px">        <b style="color:#000080;letter-spacing:0.4px">return</b> num*num;</div>
<div class="a m" style="left:528px;top:248px;line-height:19px">  }</div>
<svg style="left:0;top:0" width="1" height="1"><polyline points="620.5,149.5 622.5,147.5 624.5,149.5 626.5,147.5 628.5,149.5 630.5,147.5 632.5,149.5 634.5,147.5 636.5,149.5 638.5,147.5 640.5,149.5 642.5,147.5 644.5,149.5 646.5,147.5 648.5,149.5 650.5,147.5 652.5,149.5 654.5,147.5 656.5,149.5 658.5,147.5 660.5,149.5 662.5,147.5 664.5,149.5 666.5,147.5 668.5,149.5 670.5,147.5 672.5,149.5 674.5,147.5 676.5,149.5 678.5,147.5 680.5,149.5 682.5,147.5 684.5,149.5 686.5,147.5 688.5,149.5 690.5,147.5 692.5,149.5 694.5,147.5 696.5,149.5 698.5,147.5 700.5,149.5 702.5,147.5 704.5,149.5 706.5,147.5 708.5,149.5 710.5,147.5 712.5,149.5" fill="none" stroke="#0f8f0f" stroke-width="1.1"/></svg>
<svg style="left:0;top:0" width="1" height="1"><polyline points="528.5,187.5 530.5,185.5 532.5,187.5 534.5,185.5 536.5,187.5 538.5,185.5 540.5,187.5 542.5,185.5 544.5,187.5 546.5,185.5 548.5,187.5 550.5,185.5 552.5,187.5 554.5,185.5 556.5,187.5 558.5,185.5 560.5,187.5 562.5,185.5 564.5,187.5 566.5,185.5 568.5,187.5 570.5,185.5 572.5,187.5 574.5,185.5 576.5,187.5 578.5,185.5 580.5,187.5 582.5,185.5 584.5,187.5" fill="none" stroke="#0f8f0f" stroke-width="1.1"/></svg>
<svg style="left:0;top:0" width="1" height="1"><polyline points="588.5,187.5 590.5,185.5 592.5,187.5 594.5,185.5 596.5,187.5 598.5,185.5 600.5,187.5 602.5,185.5 604.5,187.5 606.5,185.5 608.5,187.5 610.5,185.5 612.5,187.5 614.5,185.5" fill="none" stroke="#0f8f0f" stroke-width="1.1"/></svg>
<svg style="left:0;top:0" width="1" height="1"><polyline points="618.5,187.5 620.5,185.5 622.5,187.5 624.5,185.5 626.5,187.5 628.5,185.5 630.5,187.5 632.5,185.5 634.5,187.5 636.5,185.5 638.5,187.5 640.5,185.5 642.5,187.5 644.5,185.5 646.5,187.5 648.5,185.5 650.5,187.5 652.5,185.5 654.5,187.5 656.5,185.5 658.5,187.5 660.5,185.5 662.5,187.5" fill="none" stroke="#0f8f0f" stroke-width="1.1"/></svg>
<svg style="left:0;top:0" width="1" height="1"><polyline points="720.5,187.5 722.5,185.5 724.5,187.5 726.5,185.5 728.5,187.5 730.5,185.5 732.5,187.5 734.5,185.5 736.5,187.5 738.5,185.5 740.5,187.5 742.5,185.5 744.5,187.5 746.5,185.5 748.5,187.5 750.5,185.5 752.5,187.5 754.5,185.5 756.5,187.5 758.5,185.5 760.5,187.5 762.5,185.5 764.5,187.5 766.5,185.5 768.5,187.5 770.5,185.5 772.5,187.5 774.5,185.5 776.5,187.5 778.5,185.5 780.5,187.5 782.5,185.5 784.5,187.5 786.5,185.5 788.5,187.5 790.5,185.5 792.5,187.5 794.5,185.5 796.5,187.5 798.5,185.5 800.5,187.5 802.5,185.5 804.5,187.5 806.5,185.5 808.5,187.5 810.5,185.5 812.5,187.5" fill="none" stroke="#0f8f0f" stroke-width="1.1"/></svg>
<svg style="left:0;top:0" width="1" height="1"><polyline points="624.5,206.5 626.5,204.5 628.5,206.5 630.5,204.5 632.5,206.5 634.5,204.5 636.5,206.5 638.5,204.5 640.5,206.5 642.5,204.5 644.5,206.5 646.5,204.5 648.5,206.5 650.5,204.5 652.5,206.5 654.5,204.5 656.5,206.5 658.5,204.5 660.5,206.5 662.5,204.5" fill="none" stroke="#0f8f0f" stroke-width="1.1"/></svg>
<svg style="left:0;top:0" width="1" height="1"><polyline points="696.5,206.5 698.5,204.5 700.5,206.5 702.5,204.5 704.5,206.5 706.5,204.5 708.5,206.5 710.5,204.5 712.5,206.5 714.5,204.5 716.5,206.5 718.5,204.5 720.5,206.5 722.5,204.5" fill="none" stroke="#0f8f0f" stroke-width="1.1"/></svg>
<div class="a" style="left:528px;top:265px;width:2px;height:16px;background:#000;"></div>
<div class="vd" style="left:542px;top:226px;height:20px;border-left:1px solid #e0e0e0"></div>
<div class="vt" style="left:12px;top:176px;transform:rotate(-90deg)"><u>1</u>: Project</div>
<svg style="left:10px;top:179px" width="16" height="16" viewBox="0 0 16 16"><circle cx="7.5" cy="7" r="6.5" fill="#6fae55"/><path d="M3 13.5L7.5 3.5l4.5 10M5 9.5h5" fill="none" stroke="#eee" stroke-width="1.6"/><circle cx="7.5" cy="4" r="1.8" fill="#555"/></svg>
<div class="vt" style="left:12px;top:288px;transform:rotate(-90deg)"><u>7</u>: Structure</div>
<svg style="left:10px;top:290px" width="16" height="16" viewBox="0 0 16 16"><path d="M4 4l4 8 4-8z" fill="none" stroke="#777" stroke-width="1"/><circle cx="4" cy="4" r="3" fill="#4a9ad8"/><circle cx="12" cy="4" r="3" fill="#e86060"/><circle cx="8" cy="11.5" r="3" fill="#d89040"/></svg>
<div class="vt" style="left:12px;top:510px;transform:rotate(-90deg)"><u>2</u>: Favorites</div>
<svg style="left:10px;top:513px" width="16" height="16" viewBox="0 0 16 16"><path d="M7.5 0.5l2.2 4.6 5 .6-3.7 3.4 1 5-4.5-2.5-4.5 2.5 1-5L0.3 5.7l5-.6z" fill="#f0a030"/></svg>
<div class="vt" style="left:12px;top:636px;transform:rotate(-90deg)">Build Variants</div>
<svg style="left:10px;top:639px" width="16" height="16" viewBox="0 0 16 16"><path d="M3 6a5 4.5 0 0 1 10 0z" fill="#8fbf3f"/><rect x="3" y="7" width="10" height="6" rx="1" fill="#8fbf3f"/><rect x="0.5" y="7" width="2" height="5" rx="1" fill="#8fbf3f"/><rect x="13.5" y="7" width="2" height="5" rx="1" fill="#8fbf3f"/><rect x="5" y="12" width="2" height="4" rx="1" fill="#8fbf3f"/><rect x="9" y="12" width="2" height="4" rx="1" fill="#8fbf3f"/><path d="M4.5 1.5l1.5 2M11.5 1.5l-1.5 2" stroke="#8fbf3f"/><circle cx="6" cy="4.5" r=".7" fill="#fff"/><circle cx="10" cy="4.5" r=".7" fill="#fff"/></svg>
<div class="a " style="left:1003px;top:112px;font-family:'Liberation Sans';font-weight:bold;font-style:italic;font-size:17px;line-height:18px;color:#4a86c8">m</div>
<div class="vt" style="left:1017px;top:133px;transform:rotate(90deg)">Maven Projects</div>
<svg style="left:1003px;top:241px" width="16" height="16" viewBox="0 0 16 16"><circle cx="7.5" cy="7.5" r="6" fill="none" stroke="#5fb05a" stroke-width="2" stroke-dasharray="14 3"/><circle cx="7.5" cy="7.5" r="2.5" fill="#2e8d3e"/></svg>
<div class="vt" style="left:1017px;top:258px;transform:rotate(90deg)">Gradle</div>
<svg style="left:1003px;top:313px" width="16" height="16" viewBox="0 0 16 16"><path d="M2 5a5.5 4 0 0 1 11 0z" fill="#666"/><rect x="2" y="4" width="11" height="1.6" fill="#d33"/><circle cx="7.5" cy="9.5" r="4.2" fill="#e8b070"/><path d="M2 15a5.5 3 0 0 1 11 0z" fill="#555"/><path d="M5 11h5" stroke="#333" stroke-width="1"/></svg>
<div class="vt" style="left:1017px;top:331px;transform:rotate(90deg)">Commander</div>
<svg style="left:38px;top:671px" width="12" height="12" viewBox="0 0 12 12"><rect x="0.5" y="0.5" width="10" height="10" fill="#a8a8a8" stroke="#7a7a7a"/><path d="M2.5 3.5l2 1.5-2 1.5" fill="none" stroke="#fff" stroke-width="1"/><path d="M5 8h3" stroke="#fff"/></svg>
<div class="a m" style="left:54px;top:669px;">Terminal</div>
<svg style="left:124px;top:669px" width="16" height="16" viewBox="0 0 16 16"><rect x="0" y="1" width="12" height="12" fill="#f0b070" stroke="#d89040"/><path d="M3 4.5h1M5 4.5h5M3 7h1M5 7h5M3 9.5h1M5 9.5h5" stroke="#6a4a20" stroke-width="1"/></svg>
<div class="a m" style="left:141px;top:669px;"><u>0</u>: Messages</div>
<svg style="left:229px;top:669px" width="14" height="14" viewBox="0 0 16 16" preserveAspectRatio="none"><path d="M3 6a5 4.5 0 0 1 10 0z" fill="#84b53a"/><rect x="3" y="7" width="10" height="6" rx="1" fill="#84b53a"/><rect x="0.5" y="7" width="2" height="5" rx="1" fill="#84b53a"/><rect x="13.5" y="7" width="2" height="5" rx="1" fill="#84b53a"/><rect x="5" y="12" width="2" height="4" rx="1" fill="#84b53a"/><rect x="9" y="12" width="2" height="4" rx="1" fill="#84b53a"/><path d="M4.5 1.5l1.5 2M11.5 1.5l-1.5 2" stroke="#84b53a"/><circle cx="6" cy="4.5" r=".7" fill="#fff"/><circle cx="10" cy="4.5" r=".7" fill="#fff"/></svg>
<div class="a m" style="left:248px;top:669px;"><u>6</u>: Android</div>
<svg style="left:328px;top:669px" width="16" height="16" viewBox="0 0 16 16"><path d="M1 0l11 7-11 7z" fill="#2fa84f"/></svg>
<div class="a m" style="left:345px;top:669px;"><u>4</u>: Run</div>
<svg style="left:399px;top:668px" width="16" height="16" viewBox="0 0 16 16"><circle cx="5" cy="4" r="3.6" fill="#fff" stroke="#666" stroke-width="1"/><path d="M3 3.5h4M3 5h3" stroke="#666" stroke-width=".7"/><circle cx="9" cy="9" r="3.5" fill="#f0b070"/><path d="M4 16a5 4 0 0 1 10 0z" fill="#3d8fd0"/></svg>
<div class="a m" style="left:416px;top:669px;">TODO</div>
<svg style="left:663px;top:669px" width="12" height="12" viewBox="0 0 12 12"><path d="M1.5 0.5h8.5a1.2 1.2 0 0 1 1.2 1.2v6.6a1.2 1.2 0 0 1-1.2 1.2H6.5L4.5 11.5V9.5H1.5A1.2 1.2 0 0 1 .3 8.3V1.7A1.2 1.2 0 0 1 1.5.5z" fill="#7ec47e"/><path d="M5.8 2v4M5.8 7v1.2" stroke="#333" stroke-width="1.5"/></svg>
<div class="a " style="left:676px;top:674px;font-family:'Liberation Sans';font-weight:bold;font-size:9px;line-height:10px;color:#111">2</div>
<div class="a m" style="left:686px;top:669px;">Event Log</div>
<svg style="left:763px;top:669px" width="13" height="13" viewBox="0 0 13 13"><rect x=".5" y=".5" width="11" height="12" fill="#cfe5f7" stroke="#888"/><rect x="0" y="0" width="12" height="2" fill="#3d8fd0"/><path d="M2.5 5h6M2.5 7.3h5M2.5 9.6h6" stroke="#555" stroke-width="1"/></svg>
<div class="a m" style="left:779px;top:669px;">Gradle Console</div>
<svg style="left:889px;top:669px" width="16" height="16" viewBox="0 0 16 16"><rect x="0" y="1" width="14" height="11" fill="#3d8fd0"/><rect x="2" y="3" width="10" height="4" fill="#fff"/></svg>
<div class="a m" style="left:905px;top:669px;">Memory Monitor</div>
<div class="a" style="left:13px;top:690px;width:14px;height:12px;border:1px solid #777;background:linear-gradient(#e0e0e0,#c4c4c4)"></div>
<div class="a" style="left:13px;top:703px;width:14px;height:1px;background:#555;"></div>
<div class="a m" style="left:34px;top:690px;">Gradle build finished in 16 sec (moments ago)</div>
<div class="a" style="left:839px;top:687px;width:1px;height:20px;background:#c8c8c8;"></div>
<div class="a" style="left:877px;top:687px;width:1px;height:20px;background:#c8c8c8;"></div>
<div class="a" style="left:921px;top:687px;width:1px;height:20px;background:#c8c8c8;"></div>
<div class="a" style="left:971px;top:687px;width:1px;height:20px;background:#c8c8c8;"></div>
<div class="a " style="left:848px;top:689px;font-family:'Liberation Sans';font-size:12px;line-height:16px;color:#222">8:1</div>
<div class="a m" style="left:880px;top:690px;">CRLF ⬆</div>
<div class="a m" style="left:924px;top:690px;">UTF-8 ⬆</div>
<div class="a " style="left:384px;top:357px;font-family:'Liberation Serif';font-size:18px;line-height:22px;color:rgba(150,150,140,0.42)"><span style="display:inline-block;width:9.95px;text-align:center">h</span><span style="display:inline-block;width:9.95px;text-align:center">t</span><span style="display:inline-block;width:9.95px;text-align:center">t</span><span style="display:inline-block;width:9.95px;text-align:center">p</span><span style="display:inline-block;width:9.95px;text-align:center">:</span><span style="display:inline-block;width:9.95px;text-align:center">/</span><span style="display:inline-block;width:9.95px;text-align:center">/</span><span style="display:inline-block;width:9.95px;text-align:center">b</span><span style="display:inline-block;width:9.95px;text-align:center">l</span><span style="display:inline-block;width:9.95px;text-align:center">o</span><span style="display:inline-block;width:9.95px;text-align:center">g</span><span style="display:inline-block;width:9.95px;text-align:center">.</span><span style="display:inline-block;width:9.95px;text-align:center">c</span><span style="display:inline-block;width:9.95px;text-align:center">s</span><span style="display:inline-block;width:9.95px;text-align:center">d</span><span style="display:inline-block;width:9.95px;text-align:center">n</span><span style="display:inline-block;width:9.95px;text-align:center">.</span><span style="display:inline-block;width:9.95px;text-align:center">n</span><span style="display:inline-block;width:9.95px;text-align:center">e</span><span style="display:inline-block;width:9.95px;text-align:center">t</span><span style="display:inline-block;width:9.95px;text-align:center">/</span><span style="display:inline-block;width:9.95px;text-align:center">q</span><span style="display:inline-block;width:9.95px;text-align:center">i</span><span style="display:inline-block;width:9.95px;text-align:center">u</span><span style="display:inline-block;width:9.95px;text-align:center">j</span><span style="display:inline-block;width:9.95px;text-align:center">u</span><span style="display:inline-block;width:9.95px;text-align:center">e</span><span style="display:inline-block;width:9.95px;text-align:center">r</span></div>
<svg style="left:880px;top:665px" width="150" height="45" viewBox="0 0 150 45"><path d="M12.8,9.35 H27 A10.2,10.2 0 0 1 35,26 L15,36.7 H58" fill="none" stroke="#e1251f" stroke-width="4.4" stroke-linejoin="round"/><path d="M57.5,19.25 H50.1 A 8.6,8.6 0 0 0 50.1,36.5 H58" fill="none" stroke="#e1251f" stroke-width="4"/><path d="M67,7.4 V29 A 7.5,7.5 0 0 0 74.5,36.5 H79 M59.4,19.25 H81.8" fill="none" stroke="#e1251f" stroke-width="4.2"/><circle cx="89.4" cy="28" r="8.7" fill="none" stroke="#e1251f" stroke-width="4"/><rect x="99" y="35" width="4.6" height="4" fill="#e1251f"/><path d="M115,28.4 H110.5 A 4.8,4.8 0 0 0 110.5,38 H115" fill="none" stroke="#e1251f" stroke-width="2.4"/><circle cx="121.7" cy="33.2" r="4.7" fill="none" stroke="#e1251f" stroke-width="2.4"/><path d="M129.2,39 V31.5 A 3.6,3.5 0 0 1 136.4,31.5 V39 M136.4,31.5 A 3.6,3.5 0 0 1 143.6,31.5 V39" fill="none" stroke="#e1251f" stroke-width="2.4"/><g fill="none" stroke="#3c3c3c" stroke-width="1"><path d="M105.5,14.5 L103,18 H106 L102.5,22 H106.5 M107,15.5 H112 M109.5,15.5 V22.5 M106.5,23 H112.5"/><path d="M114,14.5 H123 V19 H114 Z M118.5,14.5 V21 M116,16.5 L117,17.5 M121,16.5 L120,17.5 M113.5,21 H123.5 M114,23 L114.5,22.5 M117,23 V22.5 M120,23 V22.5 M123,23 L122.5,22.5"/><path d="M125,15 H129 V23 H125 Z M125,18 H129 M125,20.5 H129 M131,14.5 L132,16 M135,14.5 L134,16 M130.5,17 H136 M130,19.5 H136.5 M133.3,17 V20 L130.5,23.5 M133.3,20 L136.5,23.5"/><path d="M137.5,14.5 H140.5 V19 H137.5 Z M141.5,14.5 H145 V19.5 H141.5 Z M138.5,20.5 H144.5 V22.5 H138.5 Z M137,23.5 H146"/></g></svg>
<div class="a" style="left:134px;top:286px;width:188px;height:50px;border:3px solid #fd2b2b"></div>
<div class="a" style="left:132px;top:361px;width:276px;height:80px;border:3px solid #fd2b2b"></div>
<div class="a" style="left:500px;top:103px;width:450px;height:223px;border:3px solid #fd2b2b"></div>
</body></html>
